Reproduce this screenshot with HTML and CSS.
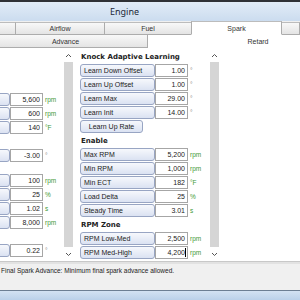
FILE: index.html
```html
<!DOCTYPE html>
<html lang="en">
<head>
  <meta charset="UTF-8" />
  <title>Engine</title>
  <link rel="stylesheet" href="styles.css">
</head>
<body>
  <div class="titlebar"><span class="title">Engine</span></div>

  <div class="tabs tabs-main">
    <div class="tab tab-cut"></div>
    <div class="tab tab-airflow">Airflow</div>
    <div class="tab tab-fuel">Fuel</div>
    <div class="tab active tab-spark">Spark</div>
    <div class="tab tab-rest"></div>
  </div>

  <div class="tabs tabs-sub">
    <div class="tab tab-advance">Advance</div>
    <div class="tab active tab-retard">Retard</div>
  </div>

  <div class="pages">
    <!-- Advance page, scrolled sideways so only the value column shows -->
    <div class="page page-left">
      <div class="page-inner">
        <div class="row"><div class="label"></div><div class="value">5,600</div><div class="unit">rpm</div></div>
        <div class="row"><div class="label"></div><div class="value">600</div><div class="unit">rpm</div></div>
        <div class="row"><div class="label"></div><div class="value">140</div><div class="unit">°F</div></div>
        <div class="gap gap-full"></div>
        <div class="row"><div class="label"></div><div class="value">-3.00</div><div class="unit deg">°</div></div>
        <div class="gap gap-short"></div>
        <div class="row"><div class="label"></div><div class="value">100</div><div class="unit">rpm</div></div>
        <div class="row"><div class="label"></div><div class="value">25</div><div class="unit">%</div></div>
        <div class="row"><div class="label"></div><div class="value">1.02</div><div class="unit">s</div></div>
        <div class="row"><div class="label"></div><div class="value">8,000</div><div class="unit">rpm</div></div>
        <div class="gap gap-full"></div>
        <div class="row"><div class="label"></div><div class="value">0.22</div><div class="unit deg">°</div></div>
      </div>
    </div>

    <div class="scrollbar">
      <div class="arrow"><svg width="7" height="5" viewBox="0 0 7 5"><polyline points="1,4 3.5,1.5 6,4" fill="none" stroke="#555" stroke-width="1"/></svg></div>
      <div class="thumb"></div>
      <div class="arrow"><svg width="7" height="5" viewBox="0 0 7 5"><polyline points="1,1 3.5,3.5 6,1" fill="none" stroke="#555" stroke-width="1"/></svg></div>
    </div>

    <div class="page page-right">
      <div class="group-title">Knock Adaptive Learning</div>
      <div class="row"><div class="label">Learn Down Offset</div><div class="value">1.00</div><div class="unit deg">°</div></div>
      <div class="row"><div class="label">Learn Up Offset</div><div class="value">1.00</div><div class="unit deg">°</div></div>
      <div class="row"><div class="label">Learn Max</div><div class="value">29.00</div><div class="unit deg">°</div></div>
      <div class="row"><div class="label">Learn Init</div><div class="value">14.00</div><div class="unit deg">°</div></div>
      <div class="row"><div class="button">Learn Up Rate</div></div>
      <div class="group-title">Enable</div>
      <div class="row"><div class="label">Max RPM</div><div class="value">5,200</div><div class="unit">rpm</div></div>
      <div class="row"><div class="label">Min RPM</div><div class="value">1,000</div><div class="unit">rpm</div></div>
      <div class="row"><div class="label">Min ECT</div><div class="value">182</div><div class="unit">°F</div></div>
      <div class="row"><div class="label">Load Delta</div><div class="value">25</div><div class="unit">%</div></div>
      <div class="row"><div class="label">Steady Time</div><div class="value">3.01</div><div class="unit">s</div></div>
      <div class="group-title">RPM Zone</div>
      <div class="row"><div class="label">RPM Low-Med</div><div class="value">2,500</div><div class="unit">rpm</div></div>
      <div class="row"><div class="label">RPM Med-High</div><div class="value focused">4,200<span class="caret"></span></div><div class="unit">rpm</div></div>
    </div>

    <div class="scrollbar">
      <div class="arrow"><svg width="7" height="5" viewBox="0 0 7 5"><polyline points="1,4 3.5,1.5 6,4" fill="none" stroke="#555" stroke-width="1"/></svg></div>
      <div class="thumb"></div>
      <div class="arrow"><svg width="7" height="5" viewBox="0 0 7 5"><polyline points="1,1 3.5,3.5 6,1" fill="none" stroke="#555" stroke-width="1"/></svg></div>
    </div>

    <div class="blank"></div>
  </div>

  <div class="splitter"></div>
  <div class="status">Final Spark Advance: Minimum final spark advance allowed.</div>
  <div class="frame-bottom"></div>
</body>
</html>
```

FILE: styles.css
```css
* {
  box-sizing: border-box;
}
body {
  margin: 0;
  width: 300px;
  height: 300px;
  overflow: hidden;
  font-family: "Liberation Sans", Arial, sans-serif;
  font-size: 7px;
  color: #222;
  background-color: #f0f0f0;
}

.titlebar {
  height: 21px;
  border-top: 2px solid #303236;
  background: linear-gradient(#e2ecf7, #cbdcef);
  display: flex;
  align-items: center;
  padding-left: 110px;
}
.title {
  font-family: "Noto Sans", sans-serif;
  font-size: 9px;
  color: #1c2838;
}

.tabs {
  display: flex;
}
.tab {
  display: flex;
  align-items: center;
  justify-content: center;
  background: linear-gradient(#f8f8f8, #e4e4e4);
  border-right: 1px solid #acacac;
  border-top: 1px solid #bcbcbc;
  border-bottom: 1px solid #acacac;
  color: #333;
}
.tab.active {
  background: #fff;
  border-bottom-color: #fff;
}
.tabs-main {
  height: 14px;
  align-items: flex-end;
  background-color: #f0f0f0;
}
.tabs-main .tab {
  height: 13px;
}
.tabs-main .tab.active {
  height: 14px;
  border-left: 1px solid #acacac;
  margin-left: -1px;
}
.tab-cut {
  width: 16px;
}
.tab-airflow {
  width: 89px;
}
.tab-fuel {
  width: 87px;
}
.tab-spark {
  width: 91px;
}
.tab-rest {
  flex: 1;
}
.tabs-sub {
  height: 13px;
}
.tabs-sub .tab {
  height: 13px;
  border-top: none;
}
.tab-advance {
  width: 148px;
  padding-right: 16px;
}
.tab-retard {
  flex: 1;
  border-right: none;
  padding-left: 68px;
}

.pages {
  display: flex;
  height: 213px;
  background-color: #fff;
}
.page {
  overflow: hidden;
}
.page-left {
  width: 63px;
}
.page-inner {
  width: 137px;
  margin-left: -72px;
  padding: 44.5px 0 0 7px;
}
.page-right {
  width: 136px;
  padding: 2px 0 0 7px;
}
.blank {
  flex: 1;
}

.group-title {
  height: 14px;
  line-height: 14px;
  padding-left: 1px;
  font-family: "DejaVu Sans", sans-serif;
  font-weight: bold;
  font-size: 7px;
  color: #222;
}
.row {
  display: flex;
  align-items: center;
  height: 13px;
  margin-bottom: 1px;
}
.label, .button {
  height: 13px;
  line-height: 11px;
  border: 1px solid #98a5c3;
  border-radius: 3px;
  background: linear-gradient(#f6f8fc, #dbe2f2);
  white-space: nowrap;
}
.label {
  width: 75px;
  padding-left: 3px;
}
.button {
  width: 63px;
  text-align: center;
}
.value {
  width: 33px;
  height: 13px;
  line-height: 11px;
  border: 1px solid #a6a6a6;
  background-color: #fff;
  text-align: right;
  padding-right: 2px;
}
.value.focused {
  padding-right: 1px;
}
.caret {
  display: inline-block;
  width: 1px;
  height: 9px;
  vertical-align: -2px;
  background-color: #000;
}
.unit {
  padding-left: 2px;
  font-size: 6.5px;
  color: #3f9a37;
}
.unit.deg {
  color: #8a8a8a;
}
.gap-full {
  height: 14px;
}
.gap-short {
  height: 11px;
}

.scrollbar {
  width: 10px;
  display: flex;
  flex-direction: column;
  align-items: center;
}
.arrow {
  height: 14px;
  display: flex;
  align-items: center;
  justify-content: center;
}
.thumb {
  flex: 1;
  width: 9px;
  background-color: #d5d5d5;
}

.splitter {
  height: 3px;
  border-top: 1px solid #c8c8c8;
  background-color: #e2e2e2;
}
.status {
  height: 26px;
  padding: 3px 0 0 1px;
  font-size: 6.5px;
  color: #222;
  white-space: nowrap;
}
.frame-bottom {
  height: 10px;
  border-top: 1px solid #6d7f93;
  background: linear-gradient(#d3e2f2, #bbd1e9);
}
```
